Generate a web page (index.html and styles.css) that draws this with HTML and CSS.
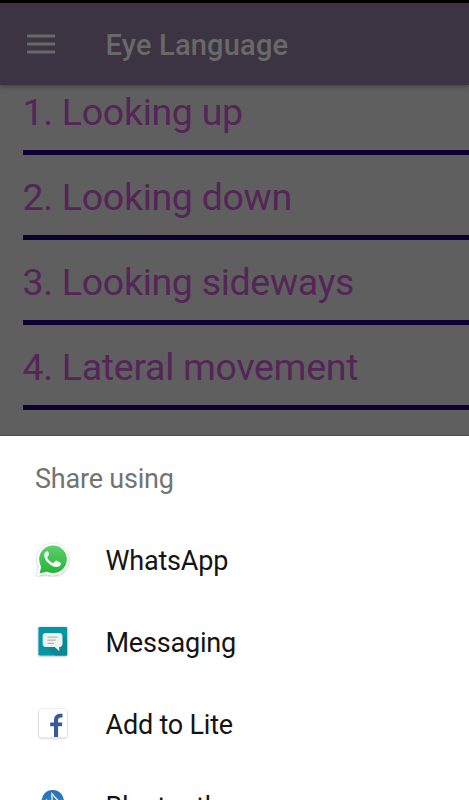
FILE: index.html
```html
<!DOCTYPE html>
<html lang="en">
<head>
<meta charset="utf-8">
<title>Eye Language</title>
<link rel="stylesheet" href="styles.css">
</head>
<body>
<div class="screen">
  <header class="appbar">
    <svg class="menu" viewBox="0 0 28 20" aria-hidden="true"><path d="M0 2h28M0 10h28M0 18h28" stroke="#696969" stroke-width="3"/></svg>
    <h1 class="title">Eye Language</h1>
  </header>
  <main class="list">
    <div class="entry"><span>1. Looking up</span></div>
    <div class="entry"><span>2. Looking down</span></div>
    <div class="entry"><span>3. Looking sideways</span></div>
    <div class="entry"><span>4. Lateral movement</span></div>
  </main>
  <section class="sheet">
    <h2 class="heading"><span>Share using</span></h2>
    <div class="option">
      <svg class="icon" viewBox="0 -1 36 36" aria-hidden="true">
        <defs>
          <linearGradient id="wa" gradientUnits="userSpaceOnUse" x1="0" y1="3" x2="0" y2="32"><stop stop-color="#5fd170"/><stop offset="1" stop-color="#1fb535"/></linearGradient>
          <filter id="soft" x="-20%" y="-20%" width="140%" height="140%"><feDropShadow dx="0" dy=".5" stdDeviation=".8" flood-opacity=".38"/></filter>
        </defs>
        <g fill="#fff" filter="url(#soft)"><circle cx="18" cy="17.500" r="15.800"/><path d="M2 33.500 4 24 12 32Z"/></g>
        <g fill="url(#wa)"><circle cx="18" cy="17.300" r="13.800"/><path d="M4.600 31.300 6.500 24 12 29.700Z"/></g>
        <path d="M13.400 10.200c-.6-1-1.100-1-1.900-.8-1.600.8-2.500 2.500-2.300 4.300.6 4.800 6 10.200 11.300 11.300 2.500.5 5-.8 5.300-2.900.2-1.100 0-1.400-.9-1.900l-3.100-1.500c-.7-.3-1-.2-1.500.4l-1.200 1.500c-.5.500-.8.500-1.500.2-2.500-1.100-4.100-2.900-5.200-4.900-.3-.6-.2-.9.200-1.300l1.200-1.500c.3-.4.2-.7 0-1.100Z" fill="#fff"/>
      </svg>
      <span class="label">WhatsApp</span>
    </div>
    <div class="option">
      <svg class="icon" viewBox="0 0 36 36" aria-hidden="true">
        <rect x="3.500" y="4" width="28.600" height="28.600" rx="1.300" fill="#0696a4" filter="url(#soft)"/>
        <path d="m11 23 9 9.600h12.100V18L27 12Z" fill="#078996"/>
        <path d="M11 10h13a3.500 3.500 0 0 1 3.500 3.500v7a3.500 3.500 0 0 1-3.200 3.500v4.300L19.800 24H11a3.300 3.300 0 0 1-3.300-3.300v-7.400A3.300 3.300 0 0 1 11 10Z" fill="#f1f3f3"/>
        <path d="M12.500 14.100h10M12.500 17.200h8.300M12.500 20.300h6.800" stroke="#aeb5b6" stroke-width="1.200"/>
      </svg>
      <span class="label">Messaging</span>
    </div>
    <div class="option">
      <svg class="icon" viewBox="0 0 36 36" aria-hidden="true">
        <rect x="4" y="4.200" width="27.800" height="28" rx="2.500" fill="#fff" filter="url(#soft)"/>
        <path d="M19 32V21.300h-3.800v-3.900H19v-1.900c0-4.300 2.400-6.700 6.200-6.700 1 0 1.700.1 2.300.2v3.600h-1.700c-2 0-2.700 1-2.700 2.600v2.200h4.200l-.4 3.900h-3.800V32Z" fill="#3b5998"/>
      </svg>
      <span class="label">Add to Lite</span>
    </div>
    <div class="option">
      <svg class="icon" viewBox="0 0 36 36" aria-hidden="true">
        <defs><linearGradient id="bt" x2="0" y2="1"><stop stop-color="#2672b3"/><stop offset="1" stop-color="#3f93dc"/></linearGradient></defs>
        <rect x="6.500" y="3" width="22.500" height="31" rx="11.200" fill="url(#bt)"/>
        <path d="m11 12.500 12 12-6 6V7l6 6.500-12 11.500" fill="none" stroke="#d8e9f5" stroke-width="1.500"/>
      </svg>
      <span class="label">Bluetooth</span>
    </div>
  </section>
</div>
</body>
</html>
```
FILE: styles.css
```css
* { box-sizing: border-box; }
body { margin: 0; font-family: Roboto, sans-serif; }
.screen {
  width: 469px;
  height: 800px;
  overflow: hidden;
  display: flex;
  flex-direction: column;
  background: #5f5f5f;
}
.appbar {
  flex: none;
  height: 85px;
  border-top: 3px solid #000;
  background: #3c3443;
  display: flex;
  align-items: center;
  padding-left: 27px;
  box-shadow: 0 1px 5px rgba(0, 0, 0, .4);
}
.menu { width: 28px; height: 20px; margin-right: 50.5px; }
.title { margin: 0; padding-top: 2px; font-size: 29px; font-weight: 500; line-height: 34px; letter-spacing: .2px; color: #696969; }
.list { flex: none; height: 351px; padding-left: 23px; }
.entry {
  height: 85px;
  border-bottom: 5px solid #0d0033;
  font-size: 37.5px;
  line-height: 44px;
  letter-spacing: -.3px;
  text-indent: -.5px;
  color: #552459;
  padding-top: 20px;
}
.entry:first-child { height: 70px; padding-top: 5px; }
.sheet { flex: none; height: 364px; overflow: hidden; background: #fff; box-shadow: 0 0 2px rgba(0, 0, 0, .5); }
.heading {
  margin: 0;
  height: 82px;
  padding: 3px 0 0 35px;
  display: flex;
  align-items: center;
  font-size: 27px;
  line-height: 32px;
  letter-spacing: -.2px;
  font-weight: 400;
  color: #737373;
}
.option {
  height: 82px;
  padding-left: 35px;
  display: flex;
  align-items: center;
  gap: 34.5px;
  font-size: 27px;
  line-height: 32px;
  letter-spacing: -.2px;
  color: #141414;
}
.label { padding-top: 3px; }
.icon { width: 36px; height: 36px; }
```
